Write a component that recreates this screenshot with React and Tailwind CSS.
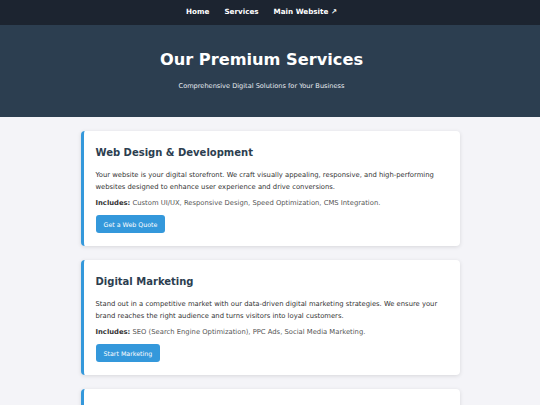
const services = [
  {
    title: 'Web Design & Development',
    text: 'Your website is your digital storefront. We craft visually appealing, responsive, and high-performing websites designed to enhance user experience and drive conversions.',
    includes: 'Custom UI/UX, Responsive Design, Speed Optimization, CMS Integration.',
    cta: 'Get a Web Quote',
  },
  {
    title: 'Digital Marketing',
    text: 'Stand out in a competitive market with our data-driven digital marketing strategies. We ensure your brand reaches the right audience and turns visitors into loyal customers.',
    includes: 'SEO (Search Engine Optimization), PPC Ads, Social Media Marketing.',
    cta: 'Start Marketing',
  },
  {
    title: 'Branding & Identity',
    text: 'Build a memorable brand with a consistent visual identity that connects with your audience.',
    includes: 'Logo Design, Brand Guidelines, Print Materials.',
    cta: 'Build My Brand',
  },
];

export default function App() {
  return (
    <div className="min-h-screen bg-[#f4f4f8] font-['DejaVu_Sans',sans-serif]">
      {/* Nav */}
      <nav className="h-[25px] bg-[#1c2430] flex items-center justify-center gap-[15px] pr-[17px] text-[7.2px] font-bold text-white">
        <a>Home</a>
        <a>Services</a>
        <a>Main Website ↗</a>
      </nav>

      {/* Hero */}
      <header className="h-[92px] bg-[#2c3e50] text-white flex flex-col items-center pt-[21px] pr-[17px]">
        <h1 className="text-[16.2px] font-bold leading-[28px]">Our Premium Services</h1>
        <p className="text-[6.6px] mt-[8px] text-[#e6ebf0]">Comprehensive Digital Solutions for Your Business</p>
      </header>

      {/* Cards */}
      <main className="w-[379px] mx-auto pt-[14px] flex flex-col gap-[14px]">
        {services.map((s) => (
          <section
            key={s.title}
            className="bg-white rounded-[4px] border-l-[3px] border-[#3498db] shadow-[0_1px_4px_rgba(0,0,0,0.12)] pl-[12px] pr-[15px] pt-[13px] pb-[13px] h-[115px]"
          >
            <h2 className="text-[10px] font-bold text-[#2c3e50] leading-[18px]">{s.title}</h2>
            <p className="text-[6.8px] leading-[11.5px] text-[#333] mt-[8px]">{s.text}</p>
            <p className="text-[6.8px] leading-[11.5px] text-[#555] mt-[5px]">
              <strong className="text-[#333]">Includes:</strong> {s.includes}
            </p>
            <button className="mt-[5px] h-[18px] px-[8px] rounded-[3px] bg-[#3498db] text-white text-[6.3px]">
              {s.cta}
            </button>
          </section>
        ))}
      </main>
    </div>
  );
}
